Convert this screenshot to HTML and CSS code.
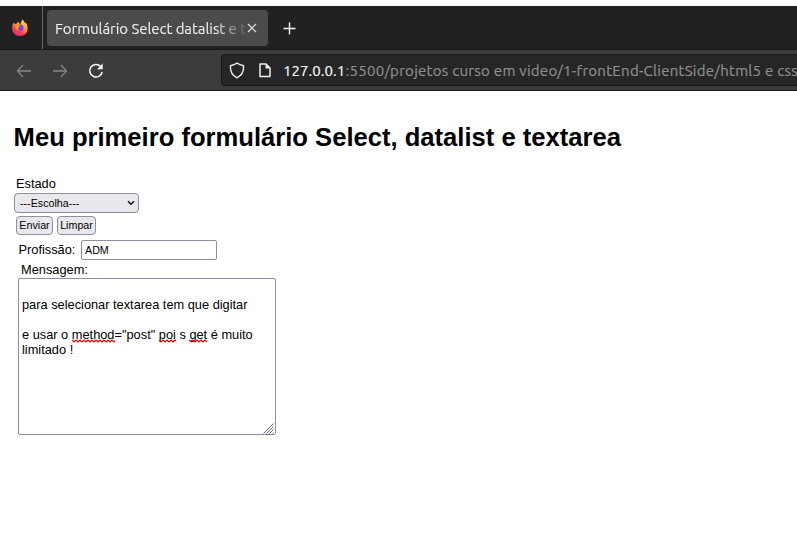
FILE: index.html
```html
<!DOCTYPE html>
<html lang="pt-br">
<head>
<meta charset="utf-8">
<title>Formulário Select datalist e textarea</title>
<link rel="stylesheet" href="styles.css">
</head>
<body>
<header class="browser">
  <div class="tabs">
    <div class="pinned">
      <svg width="18" height="18" viewBox="0 0 18 18">
        <defs>
          <linearGradient id="flame" x1=".8" y1="0" x2=".25" y2="1"><stop offset="0" stop-color="#fff04a"/><stop offset=".4" stop-color="#ff9b27"/><stop offset=".7" stop-color="#ff4545"/><stop offset="1" stop-color="#ee1677"/></linearGradient>
        </defs>
        <path fill="url(#flame)" d="M2.600 3.200 3.800 5Q5 4.300 6 4.400 6.400 3.200 7.500 2.600 7.500 4.200 9 5L10 4Q9.800 1.800 12 .5 12.300 2.300 14 4L14.600 3.500Q17 6 16.700 10 16 16.800 9 17 1.800 16.600 1.100 10 .9 6 2.600 3.200Z"/>
        <circle cx="9.200" cy="8.700" r="3.200" fill="#7542e5"/>
        <path fill="#ff9c26" d="M4 6.400Q7 5.300 9.400 7.500 8.300 8.600 7 8.700 7 10.300 8.700 11.200 5.600 11.600 4.600 9Z"/>
      </svg>
    </div>
    <div class="tab">
      <span class="tab-title">Formulário Select datalist e t</span>
      <svg class="close" width="10" height="10" viewBox="0 0 10 10"><path d="M1 1 9 9M9 1 1 9" stroke="#dedede" stroke-width="1.200"/></svg>
    </div>
    <svg class="plus" width="13" height="13" viewBox="0 0 13 13"><path d="M6.500 .5V12.500M.5 6.500H12.500" stroke="#f5f5f5" stroke-width="1.400"/></svg>
  </div>
  <div class="toolbar">
    <svg class="back" width="16" height="14" viewBox="0 0 16 14"><path d="M7 1 1.500 7 7 13M1.500 7H15" fill="none" stroke="#858585" stroke-width="1.300"/></svg>
    <svg class="forward" width="16" height="14" viewBox="0 0 16 14"><path d="M9 1 14.500 7 9 13M14.500 7H1" fill="none" stroke="#858585" stroke-width="1.300"/></svg>
    <svg class="reload" width="16" height="16" viewBox="0 0 16 16"><path d="M12.700 3.500A6.300 6.300 0 1 0 14.200 9" fill="none" stroke="#fafafa" stroke-width="1.500"/><path d="M14.700 .5V6.300H9Z" fill="#fafafa"/></svg>
    <div class="address">
      <svg class="shield" width="16" height="17" viewBox="0 0 16 17"><path d="M8 1Q10.500 3 14.600 3.800 15 12.500 8 15.800 1 12.500 1.400 3.800 5.500 3 8 1Z" fill="none" stroke="#eee" stroke-width="1.400" stroke-linejoin="round"/></svg>
      <svg class="page" width="12" height="15" viewBox="0 0 12 15"><path d="M1 1H7L11 5V13.500H1Z" fill="none" stroke="#eee" stroke-width="1.500" stroke-linejoin="round"/><path d="M6.500 1V5.500H11Z" fill="#eee"/></svg>
      <span class="host">127.0.0.1</span><span class="path">:5500/projetos curso em video/1-frontEnd-ClientSide/html5 e css</span>
    </div>
  </div>
</header>
<main>
  <h1>Meu primeiro formulário Select, datalist e textarea</h1>
  <form>
    <div class="label-state">Estado</div>
    <div class="select"><span>---Escolha---</span><svg width="8" height="6" viewBox="0 0 8 6"><path d="M1 1.200 4 4.200 7 1.200" fill="none" stroke="#111" stroke-width="1.500"/></svg></div>
    <div class="buttons"><button type="button" class="send">Enviar</button><button type="button" class="clear">Limpar</button></div>
    <div class="job"><label for="job">Profissão:</label><input id="job" value="ADM"></div>
    <div class="label-message">Mensagem:</div>
    <div class="message"><br>para selecionar textarea tem que digitar<br><br>e usar o <span class="typo">method<svg class="wave" width="43" height="4"><path d="M0 1 2 3 4 1 6 3 8 1 10 3 12 1 14 3 16 1 18 3 20 1 22 3 24 1 26 3 28 1 30 3 32 1 34 3 36 1 38 3 40 1 42 3 43 2"/></svg></span>="post" <span class="typo">poi<svg class="wave" width="17" height="4"><path d="M0 1 2 3 4 1 6 3 8 1 10 3 12 1 14 3 16 1 17 2"/></svg></span> s <span class="typo">get<svg class="wave" width="18" height="4"><path d="M0 1 2 3 4 1 6 3 8 1 10 3 12 1 14 3 16 1 18 3"/></svg></span> é muito<br>limitado !
      <svg class="grip" width="11" height="11" viewBox="0 0 11 11"><path d="M.5 10.500 10.500 .5M3.500 10.500 10.500 3.500M6.500 10.500 10.500 6.500M9.500 10.500 10.500 9.500" stroke="#666" stroke-width="1"/></svg>
    </div>
  </form>
</main>
</body>
</html>
```
FILE: styles.css
```css
* { box-sizing: border-box; }
body { margin: 0; height: 534px; overflow: hidden; background: #fff; color: #000; font: 12.8px/15px "Liberation Sans", Arial, sans-serif; }
svg { display: block; flex: none; }
.browser { margin-top: 6px; height: 85px; overflow: hidden; font-family: Ubuntu, "Noto Sans", sans-serif; }
.tabs { display: flex; height: 44px; background: #212121; border-bottom: 1px solid #171717; }
.pinned { flex: none; width: 43px; border-right: 1px solid #6a6a6a; padding: 13px 0 0 11px; }
.tab { flex: none; display: flex; width: 221px; height: 36px; margin: 4px 0 0 4px; padding-left: 8px; background: #4b4b4b; border-radius: 4px; }
.tab-title { width: 192px; white-space: nowrap; font-size: 15px; line-height: 37px; letter-spacing: -.06px; color: transparent; -webkit-text-stroke: .2px transparent; background: linear-gradient(90deg, #f2f2f2 160px, #4b4b4b 194px); background-clip: text; -webkit-background-clip: text; }
.close { margin: 13px 0 0; }
.plus { margin: 16px 0 0 15px; }
.toolbar { display: flex; height: 41px; background: #3c3c3c; border-bottom: 1px solid #171717; }
.back { margin: 14px 0 0 16px; }
.forward { margin: 14px 0 0 20px; }
.reload { margin: 13px 0 0 20px; }
.address { flex: none; display: flex; width: 700px; height: 32px; margin: 4px 0 0 117px; padding-left: 7px; background: #262626; border: 1px solid #171717; border-radius: 4px; font-size: 15px; line-height: 32px; white-space: nowrap; -webkit-text-stroke: .2px; }
.shield { margin-top: 7px; }
.page { margin: 8px 0 0 14px; }
.host { width: 62.5px; margin-left: 12px; color: #fafafa; letter-spacing: .05px; }
.path { color: #8e8e8e; letter-spacing: .27px; }
main { padding: 31px 13px 0; }
h1 { margin: 0 0 0 .6px; font-size: 25.6px; line-height: 30px; white-space: nowrap; }
form { padding-top: 24px; }
.label-state { padding-left: 3px; height: 17px; }
.select { display: flex; align-items: center; justify-content: space-between; width: 125px; height: 20px; margin-left: 1px; padding: 0 3px 0 5px; border: 1px solid #8f8f9d; border-radius: 4px; background: #e9e9ed; font-size: 10.7px; }
.buttons { display: flex; gap: 4px; margin: 3px 0 0 3px; }
button { height: 19px; padding: 0; border: 1px solid #8f8f9d; border-radius: 4px; background: #e9e9ed; color: #000; font: 10.7px/15px "Liberation Sans", Arial, sans-serif; }
.send { width: 37px; }
.clear { width: 39px; }
.job { display: flex; align-items: center; margin: 5px 0 0 5px; }
.job label { width: 63px; padding: 0 0 2px .5px; }
input { width: 136px; height: 20px; padding: 1px 3px; border: 1px solid #8f8f9d; border-radius: 2px; background: #fff; color: #000; font: 10.7px "Liberation Sans", Arial, sans-serif; }
.label-message { margin: 2px 0 0 8px; height: 16px; }
.message { position: relative; width: 258px; height: 157px; margin-left: 5px; padding: 3px; border: 1px solid #8f8f9d; border-radius: 2px; white-space: nowrap; }
.typo { position: relative; }
.wave { position: absolute; left: 0; bottom: -1px; }
.wave path { fill: none; stroke: #f00000; stroke-width: 1.200; }
.grip { position: absolute; right: 1px; bottom: 0; }
```
